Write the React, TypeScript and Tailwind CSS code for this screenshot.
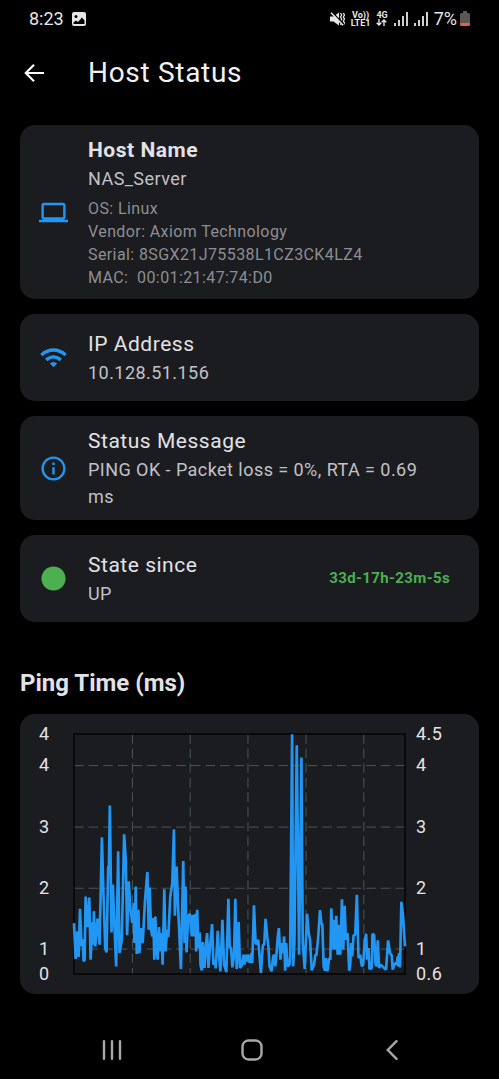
import type { ReactNode } from "react";
import { MdCircle, MdInfoOutline, MdLaptop, MdWifi } from "react-icons/md";

const details = [
  "OS: Linux",
  "Vendor: Axiom Technology",
  "Serial: 8SGX21J75538L1CZ3CK4LZ4",
  "MAC:  00:01:21:47:74:D0",
];

// Ping samples in the chart's own units; the plot area starts at 161,71
const samples =
  "161,640 166,748 171,665 175,742 179,597 184,710 187,688 190,755 193,750 196,560 201,652 207,563 211,750 217,637 219,705 221,604 225,710 232,626 238,705 245,382 250,560 255,715 259,728 264,468 266,476 269,286 274,668 278,524 283,650 288,770 294,424 298,730 305,690 312,373 317,450 321,676 326,514 331,600 337,640 341,580 343,700 347,530 350,733 355,600 358,730 362,655 368,700 375,570 382,486 386,660 389,533 393,660 397,680 400,625 403,750 406,620 410,720 413,750 417,652 421,725 425,670 428,765 433,538 437,725 441,660 445,682 451,560 457,520 462,358 465,618 470,470 475,600 483,778 490,453 494,700 497,530 500,728 505,618 " +
  "510,612 516,680 519,615 523,680 527,612 529,725 532,600 536,715 540,668 542,765 546,782 549,697 554,775 559,700 562,670 566,775 570,720 577,643 581,765 585,750 588,776 594,663 598,740 602,785 608,630 613,765 620,787 626,567 630,712 634,715 638,773 643,740 647,567 651,778 654,720 657,637 661,775 666,768 672,735 675,765 678,735 682,755 686,735 691,760 696,730 698,760 703,586 708,700 712,703 716,690 724,790 730,705 734,705 738,627 743,680 747,715 750,770 756,785 761,740 764,735 767,770 770,745 774,690 778,655 783,750 787,700 791,730 794,680 797,783 800,700 804,770 810,765 812,740 818,72 821,770 825,700 832,105 839,735 846,142 850,700 856,778 863,612 868,670 872,690 877,782 884,765 888,735 891,738 896,690 902,601 906,640 909,645 913,770 917,783 920,745 924,785 930,745 933,750 936,595 941,720 945,630 948,720 951,618 955,735 959,645 963,735 968,568 972,720 976,588 " +
  "980,690 985,670 990,783 993,765 996,700 999,740 1003,677 1008,675 1013,555 1018,745 1023,735 1028,770 1032,765 1037,690 1041,672 1044,750 1048,715 1051,778 1058,775 1060,672 1065,676 1069,760 1072,770 1076,692 1080,775 1085,765 1090,770 1095,775 1101,780 1107,692 1113,730 1118,738 1121,780 1127,760 1133,765 1136,740 1138,770 1140,730 1143,773 1147,576 1152,615 1158,710";

export default function App() {
  return (
    <div className="flex min-h-screen flex-col bg-black font-['Roboto',sans-serif] text-[#e3e2e6]">
      <StatusBar />
      <header className="flex h-[72px] items-center gap-11 pl-6">
        <button type="button" aria-label="Back" className="text-white">
          <ArrowIcon />
        </button>
        <h1 className="text-[28px] leading-9 tracking-wide text-[#f2f2f4]">Host Status</h1>
      </header>

      <main className="flex flex-col gap-[15px] px-5 pt-4">
        <Card icon={<MdLaptop size={29} />} title="Host Name" subtitle="NAS_Server" strong>
          <ul className="mt-[5px] text-[16px] leading-[23px] tracking-wide whitespace-pre-wrap text-[#8e8e91]">
            {details.map((line) => (
              <li key={line}>{line}</li>
            ))}
          </ul>
        </Card>
        <Card icon={<MdWifi size={29} />} title="IP Address" subtitle="10.128.51.156" />
        <Card
          icon={<MdInfoOutline size={29} />}
          title="Status Message"
          subtitle="PING OK - Packet loss = 0%, RTA = 0.69 ms"
        />
        <Card
          icon={<MdCircle size={29} className="text-[#4caf50]" />}
          title="State since"
          subtitle="UP"
          trailing="33d-17h-23m-5s"
        />
      </main>

      <section className="px-5 pt-[45px] pb-6">
        <h2 className="text-[24px] leading-8 font-bold">Ping Time (ms)</h2>
        <PingChart />
      </section>
      <NavBar />
    </div>
  );
}

type CardProps = {
  icon: ReactNode;
  title: string;
  subtitle: string;
  strong?: boolean;
  trailing?: string;
  children?: ReactNode;
};

function Card({ icon, title, subtitle, strong, trailing, children }: CardProps) {
  return (
    <article className="flex min-h-[87px] items-center gap-5 rounded-[15px] bg-[#1b1c20] py-[10px] pr-[29px] pl-[19px]">
      <span className="shrink-0 text-[#2196f3]">{icon}</span>
      <div className="min-w-0 flex-1 pr-3">
        <h2 className={strong ? "text-[21px] leading-[30px] font-bold tracking-wide" : "text-[21px] leading-[30px] tracking-wide"}>
          {title}
        </h2>
        <p className="text-[18px] leading-[27px] tracking-wide text-[#c2c1c8]">{subtitle}</p>
        {children}
      </div>
      {trailing && <span className="text-[15px] font-bold tracking-wide text-[#4caf50]">{trailing}</span>}
    </article>
  );
}

function PingChart() {
  return (
    <div className="mt-[15px] flex rounded-[15px] bg-[#1b1c20] py-2">
      <AxisLabels values={["4", "4", "3", "2", "1", "0"]} className="w-[54px] pl-[19px]" />
      <svg
        viewBox="161 71 997 722"
        preserveAspectRatio="none"
        className="my-3 h-[240px] min-w-0 flex-1 overflow-visible"
        role="img"
        aria-label="Ping time"
      >
        <g stroke="#4b5557" strokeWidth="3" strokeDasharray="29 15">
          {[166, 351, 535, 718].map((y) => (
            <line key={y} x1="161" x2="1158" y1={y} y2={y} />
          ))}
          {[337, 511, 685, 860, 1034].map((x) => (
            <line key={x} x1={x} x2={x} y1="71" y2="793" />
          ))}
        </g>
        <rect x="161" y="71" width="997" height="722" fill="none" stroke="#000" strokeWidth="4" />
        <polyline points={samples} fill="none" stroke="#2196f3" strokeWidth="8" strokeLinejoin="bevel" />
      </svg>
      <AxisLabels values={["4.5", "4", "3", "2", "1", "0.6"]} className="w-[74px] pl-[11px]" />
    </div>
  );
}

function AxisLabels({ values, className }: { values: string[]; className: string }) {
  return (
    <ol
      className={`grid shrink-0 grid-rows-[31px_62px_61px_61px_25px_24px] text-[18px] leading-6 tracking-wide ${className}`}
    >
      {values.map((value, i) => (
        <li key={i}>{value}</li>
      ))}
    </ol>
  );
}

function StatusBar() {
  return (
    <div className="flex h-[37px] items-center justify-between px-[29px] text-[18px] text-[#e6e6e6]">
      <div className="flex items-center gap-2">
        <span>8:23</span>
        <PictureIcon />
      </div>
      <div className="flex items-center gap-[6px]">
        <MuteIcon />
        <div className="text-center text-[9px] leading-[8px] font-bold">
          <div>Vo))</div>
          <div>LTE1</div>
        </div>
        <div className="text-center text-[9px] leading-[8px] font-bold">
          <div>4G</div>
          <svg width="11" height="7" viewBox="0 0 11 7" fill="none" stroke="currentColor" strokeWidth="1.4" aria-hidden>
            <path d="M3 0v6M0.7 3.7L3 6l2.3-2.3M8 7V1M5.7 3.3L8 1l2.3 2.3" />
          </svg>
        </div>
        <SignalIcon />
        <SignalIcon />
        <div className="flex items-center gap-[3px]">
          <span>7%</span>
          <BatteryIcon />
        </div>
      </div>
    </div>
  );
}

function ArrowIcon() {
  return (
    <svg width="20" height="18" viewBox="0 0 20 18" fill="none" stroke="currentColor" strokeWidth="2.2" aria-hidden>
      <path d="M10 0.8L1.800 9l8.200 8.200M1.800 9H20" />
    </svg>
  );
}

function PictureIcon() {
  return (
    <svg width="14" height="14" viewBox="0 0 14 14" aria-hidden>
      <rect width="14" height="14" rx="2" fill="currentColor" />
      <circle cx="4" cy="4.500" r="1.500" fill="#000" />
      <path d="M1.500 12V10.500L4 8.500l2 1.500 4-4.500 2.500 3V12z" fill="#000" />
    </svg>
  );
}

function MuteIcon() {
  return (
    <svg width="15" height="14" viewBox="0 0 15 14" fill="none" aria-hidden>
      <path d="M0 4.500h3.500L9 0.500v13L3.500 9.500H0z" fill="currentColor" />
      <path d="M10.500 1l1.200 2-1.200 2 1.200 2-1.200 2 1.200 2-1.200 2M13.300 1l1.200 2-1.200 2 1.200 2-1.200 2 1.200 2-1.200 2" stroke="currentColor" strokeWidth="1.300" />
      <path d="M2 0l12 12.500" stroke="#000" strokeWidth="1.300" />
      <path d="M1 0.700l12 12.500" stroke="currentColor" strokeWidth="1.500" />
    </svg>
  );
}

function SignalIcon() {
  return (
    <svg width="14" height="14" viewBox="0 0 14 14" stroke="currentColor" strokeWidth="1.8" aria-hidden>
      <path d="M1 14v-3M5 14V8M9 14V4M13 14V0" />
    </svg>
  );
}

function BatteryIcon() {
  return (
    <svg width="10" height="15" viewBox="0 0 10 15" aria-hidden>
      <path d="M3 0h4v2h1.5A1.5 1.5 0 0110 3.500V12H0V3.500A1.500 1.500 0 011.500 2H3z" fill="#5c5755" />
      <path d="M0 12h10v1.500A1.500 1.500 0 018.500 15h-7A1.500 1.500 0 010 13.500z" fill="#e8602c" />
    </svg>
  );
}

function NavBar() {
  return (
    <nav className="mt-auto grid h-[58px] grid-cols-3 items-center justify-items-center pr-[37px] pl-[42px] text-[#a8a8a8]">
      <button type="button" aria-label="Recent apps">
        <svg width="20" height="20" viewBox="0 0 20 20" stroke="currentColor" strokeWidth="2.400" strokeLinecap="round" aria-hidden>
          <path d="M2 1.200v17.600M10 1.200v17.600M18 1.200v17.600" />
        </svg>
      </button>
      <button type="button" aria-label="Home">
        <svg width="22" height="22" viewBox="0 0 22 22" fill="none" stroke="currentColor" strokeWidth="2.400" aria-hidden>
          <rect x="1.500" y="1.500" width="19" height="19" rx="6" />
        </svg>
      </button>
      <button type="button" aria-label="Back">
        <svg width="12" height="20" viewBox="0 0 12 20" fill="none" stroke="currentColor" strokeWidth="2.400" strokeLinecap="round" aria-hidden>
          <path d="M10.500 1.200L1.800 10l8.700 8.800" />
        </svg>
      </button>
    </nav>
  );
}
